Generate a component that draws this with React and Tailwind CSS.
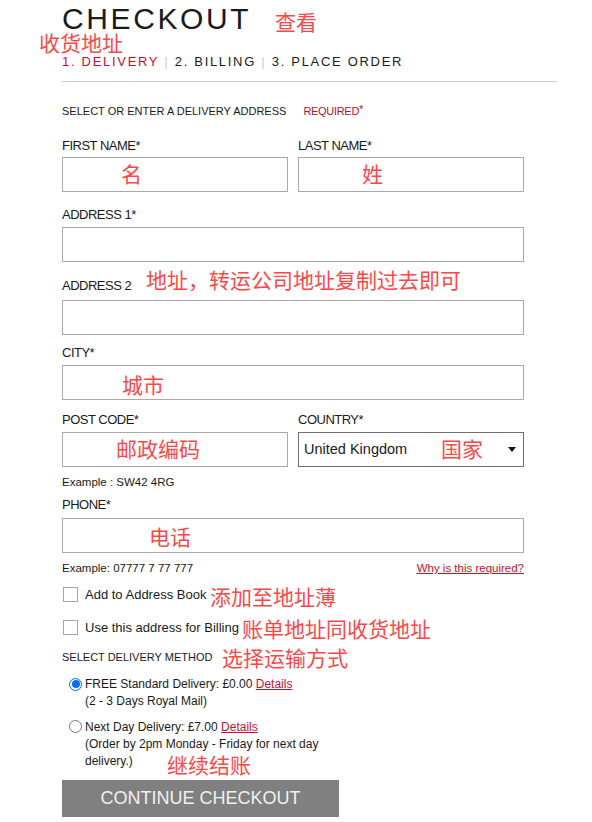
import React from 'react';

const cjk = "font-['Noto_Sans_CJK_SC',sans-serif]";
const note = `absolute ${cjk} text-[21px] leading-none text-[#ff4747] whitespace-nowrap`;

function Label({ children, className = '' }) {
  return (
    <div className={`text-[13px] leading-[15px] tracking-[-0.5px] text-[#1a1a1a] ${className}`}>
      {children}
    </div>
  );
}

function Box({ className = '', children }) {
  return (
    <div className={`relative h-[35px] border border-[#aaaaaa] bg-white ${className}`}>{children}</div>
  );
}

function Check({ label, className = '' }) {
  return (
    <label className={`flex items-start ${className}`}>
      <span className="w-[15px] h-[15px] border border-[#a6a6a6] bg-white shrink-0 ml-[1px]" />
      <span className="ml-[7px] text-[13px] leading-[15px] text-[#1a1a1a]">{label}</span>
    </label>
  );
}

function Radio({ checked, children, className = '' }) {
  return (
    <div className={`flex items-start ${className}`}>
      {checked ? (
        <span className="mt-[1.5px] ml-[7px] w-[13px] h-[13px] rounded-full border-[1.5px] border-[#0a6cf0] bg-white flex items-center justify-center shrink-0">
          <span className="w-[8px] h-[8px] rounded-full bg-[#0a6cf0]" />
        </span>
      ) : (
        <span className="mt-[1px] ml-[7px] w-[13px] h-[13px] rounded-full border border-[#7a7a7a] bg-white shrink-0" />
      )}
      <div className="ml-[3px] text-[12px] leading-[17px] text-[#1a1a1a]">{children}</div>
    </div>
  );
}

export default function App() {
  return (
    <div className="w-[592px] h-[822px] bg-white overflow-hidden font-['Liberation_Sans',Arial,sans-serif] text-[#1a1a1a]">
      <div className="relative ml-[62px] w-[462px] pt-[7px]">
        {/* annotations */}
        <span className={`${note} left-[213px] top-[11px]`}>查看</span>
        <span className={`${note} !leading-[20px] left-[-23px] top-[32px]`}>收货地址</span>

        <h1 className="text-[30px] leading-[24px] tracking-[2.6px] text-[#1a1a1a]">CHECKOUT</h1>

        <div className="mt-[24px] text-[13px] leading-[14px] tracking-[1.7px] whitespace-nowrap">
          <span className="text-[#c8102e]">1. DELIVERY</span>
          <span className="text-[#cccccc]"> | </span>
          <span>2. BILLING</span>
          <span className="text-[#cccccc]"> | </span>
          <span>3. PLACE ORDER</span>
        </div>

        <div className="mt-[12px] w-[495px] border-t border-[#cccccc]" />

        <div className="mt-[23px] text-[11px] leading-[13px] flex">
          <span>SELECT OR ENTER A DELIVERY ADDRESS</span>
          <span className="ml-[17px] text-[#b0122e] tracking-[-0.3px]">
            REQUIRED<span className="relative top-[-2px]">*</span>
          </span>
        </div>

        {/* name row */}
        <div className="mt-[20px] grid grid-cols-2 gap-x-[10px]">
          <div>
            <Label>FIRST NAME*</Label>
            <Box className="mt-[4px]">
              <span className={`${note} left-[58px] top-[5px]`}>名</span>
            </Box>
          </div>
          <div>
            <Label>LAST NAME*</Label>
            <Box className="mt-[4px]">
              <span className={`${note} left-[63px] top-[5px]`}>姓</span>
            </Box>
          </div>
        </div>

        <Label className="mt-[15px]">ADDRESS 1*</Label>
        <Box className="mt-[5px]" />

        <div className="relative mt-[16px]">
          <Label>ADDRESS 2</Label>
          <span className={`${note} left-[84px] top-[-9px]`}>地址，转运公司地址复制过去即可</span>
        </div>
        <Box className="mt-[7px]" />

        <Label className="mt-[10px]">CITY*</Label>
        <Box className="mt-[5px]">
          <span className={`${note} left-[59px] top-[8px]`}>城市</span>
        </Box>

        {/* post code / country */}
        <div className="mt-[12px] grid grid-cols-2 gap-x-[10px]">
          <div>
            <Label>POST CODE*</Label>
            <Box className="mt-[5px]">
              <span className={`${note} left-[53px] top-[5px]`}>邮政编码</span>
            </Box>
            <div className="mt-[8px] text-[11.5px] leading-[14px]">Example : SW42 4RG</div>
          </div>
          <div>
            <Label>COUNTRY*</Label>
            <div className="relative mt-[5px] h-[35px] border border-[#707070] bg-white flex items-center pl-[5px] pr-[7px]">
              <span className="text-[14.5px] text-[#1a1a1a]">United Kingdom</span>
              <span className={`${note} left-[142px] top-[5px]`}>国家</span>
              <svg className="ml-auto" width="8" height="5" viewBox="0 0 8 5">
                <path d="M0 0h8L4 5z" fill="#111" />
              </svg>
            </div>
          </div>
        </div>

        <Label className="mt-[8px]">PHONE*</Label>
        <Box className="mt-[6px]">
          <span className={`${note} left-[86px] top-[7px]`}>电话</span>
        </Box>
        <div className="mt-[8px] flex justify-between text-[11.5px] leading-[14px]">
          <span>Example: 07777 7 77 777</span>
          <a href="#" className="text-[#c8102e] underline">Why is this required?</a>
        </div>

        <div className="relative mt-[12px]">
          <Check label="Add to Address Book" />
          <span className={`${note} left-[148px] top-[-1px]`}>添加至地址薄</span>
        </div>
        <div className="relative mt-[18px]">
          <Check label="Use this address for Billing" />
          <span className={`${note} left-[180px] top-[-2px]`}>账单地址同收货地址</span>
        </div>

        <div className="relative mt-[16px] text-[11px] leading-[13px]">
          SELECT DELIVERY METHOD
          <span className={`${note} left-[160px] top-[-4px]`}>选择运输方式</span>
        </div>

        <Radio checked className="mt-[12px]">
          <div>
            FREE Standard Delivery: £0.00{' '}
            <a href="#" className="text-[#c8102e] underline">Details</a>
          </div>
          <div>(2 - 3 Days Royal Mail)</div>
        </Radio>

        <div className="relative mt-[9px]">
          <Radio>
            <div>
              Next Day Delivery: £7.00{' '}
              <a href="#" className="text-[#c8102e] underline">Details</a>
            </div>
            <div>(Order by 2pm Monday - Friday for next day</div>
            <div>delivery.)</div>
          </Radio>
          <span className={`${note} left-[105px] top-[35px]`}>继续结账</span>
        </div>

        <button className="mt-[10px] w-[277px] h-[37px] bg-[#808080] text-[#f0f0f0] text-[18px] flex items-center justify-center">
          CONTINUE CHECKOUT
        </button>
      </div>
    </div>
  );
}
